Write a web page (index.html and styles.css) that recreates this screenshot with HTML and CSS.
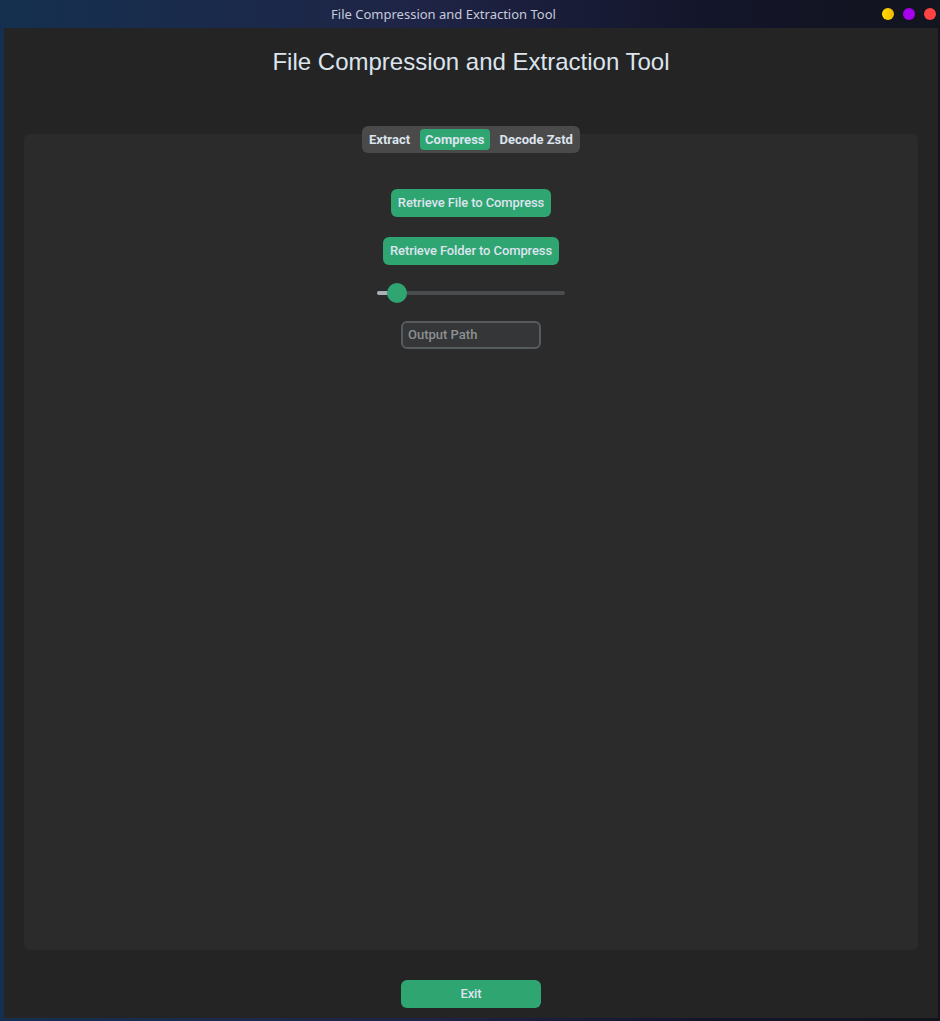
FILE: index.html
```html
<!DOCTYPE html>
<html>
<head>
<meta charset="utf-8">
<link rel="stylesheet" href="styles.css">
</head>
<body>
<div class="window">
  <div class="titlebar">
    <div class="wtitle">File Compression and Extraction Tool</div>
    <div class="dots">
      <span class="dot yellow"></span>
      <span class="dot purple"></span>
      <span class="dot red"></span>
    </div>
  </div>
  <div class="content">
    <h1 class="heading">File Compression and Extraction Tool</h1>
    <div class="tabview">
      <div class="segmented">
        <span class="seg">Extract</span>
        <span class="seg active">Compress</span>
        <span class="seg">Decode Zstd</span>
      </div>
      <div class="frame">
        <button class="btn btn-file">Retrieve File to Compress</button>
        <button class="btn btn-folder">Retrieve Folder to Compress</button>
        <div class="slider">
          <div class="track"><div class="fill"></div></div>
          <div class="thumb"></div>
        </div>
        <div class="entry">Output Path</div>
      </div>
    </div>
    <button class="btn btn-exit">Exit</button>
  </div>
</div>
</body>
</html>
```
FILE: styles.css
```css
html, body {
  margin: 0;
  padding: 0;
  height: 100%;
  background: #12141e;
}
.window {
  width: 940px;
  height: 1021px;
  display: flex;
  flex-direction: column;
  box-sizing: border-box;
  padding: 0 2px 3px 4px;
  background: linear-gradient(90deg, #15304f 0%, #1f2446 45%, #13152a 75%, #12141e 100%);
}
.titlebar {
  height: 28px;
  display: flex;
  align-items: center;
  position: relative;
  margin: 0 -2px 0 -4px;
}
.wtitle {
  flex: 1;
  text-align: center;
  padding-right: 53px;
  font-family: "Noto Sans", "Open Sans", sans-serif;
  font-size: 13px;
  color: #c6cadb;
}
.dots {
  position: absolute;
  right: 4px;
  top: 8px;
  display: flex;
  gap: 9px;
}
.dot {
  width: 12px;
  height: 12px;
  border-radius: 50%;
  display: block;
}
.yellow { background: linear-gradient(90deg, #ffe000, #f0b800); }
.purple { background: #a800ee; }
.red { background: #ff4242; }
.content {
  flex: 1;
  background: #242424;
  display: flex;
  flex-direction: column;
  align-items: center;
}
.heading {
  margin: 19px 0 0 0;
  font-family: "Liberation Sans", Arial, sans-serif;
  font-weight: normal;
  font-size: 24px;
  line-height: 30px;
  color: #dce4ee;
}
.tabview {
  align-self: stretch;
  margin: 49px 20px 0 20px;
  flex: 1;
  display: flex;
  flex-direction: column;
  align-items: center;
}
.segmented {
  position: relative;
  z-index: 1;
  height: 27px;
  box-sizing: border-box;
  padding: 3px 2px;
  gap: 5px;
  display: flex;
  background: #4a4a4a;
  border-radius: 6px;
}
.seg {
  display: flex;
  align-items: center;
  padding: 0 5px;
  border-radius: 4px;
  font-family: Roboto, "Noto Sans", sans-serif;
  font-weight: 700;
  font-size: 13px;
  color: #dce4ee;
}
.seg.active {
  background: #2fa572;
}
.frame {
  align-self: stretch;
  flex: 1;
  margin-top: -19px;
  background: #2b2b2b;
  border-radius: 6px;
  display: flex;
  flex-direction: column;
  align-items: center;
  padding-top: 55px;
}
.btn {
  border: none;
  background: #2fa572;
  color: #dce4ee;
  border-radius: 6px;
  height: 28px;
  padding: 0 0 1px 0;
  white-space: nowrap;
  font-family: Roboto, "Noto Sans", sans-serif;
  font-weight: 500;
  font-size: 13px;
  letter-spacing: -0.1px;
  cursor: pointer;
}
.btn-file { width: 160px; }
.btn-folder { width: 176px; margin-top: 20px; }
.slider {
  position: relative;
  width: 188px;
  height: 20px;
  margin-top: 18px;
  display: flex;
  align-items: center;
}
.track {
  width: 100%;
  height: 4px;
  border-radius: 2px;
  background: #4a4d50;
  overflow: hidden;
}
.fill {
  width: 20px;
  height: 100%;
  background: #aab0b5;
}
.thumb {
  position: absolute;
  left: 10px;
  top: 0;
  width: 20px;
  height: 20px;
  border-radius: 50%;
  background: #2fa572;
}
.entry {
  margin-top: 18px;
  width: 140px;
  height: 28px;
  box-sizing: border-box;
  border: 2px solid #565b5e;
  background: #343638;
  border-radius: 6px;
  padding: 0 0 1px 5px;
  display: flex;
  align-items: center;
  font-family: Roboto, "Noto Sans", sans-serif;
  font-weight: 500;
  font-size: 13px;
  color: #8e9092;
}
.btn-exit {
  width: 140px;
  margin: 30px 0 10px 0;
}
```
